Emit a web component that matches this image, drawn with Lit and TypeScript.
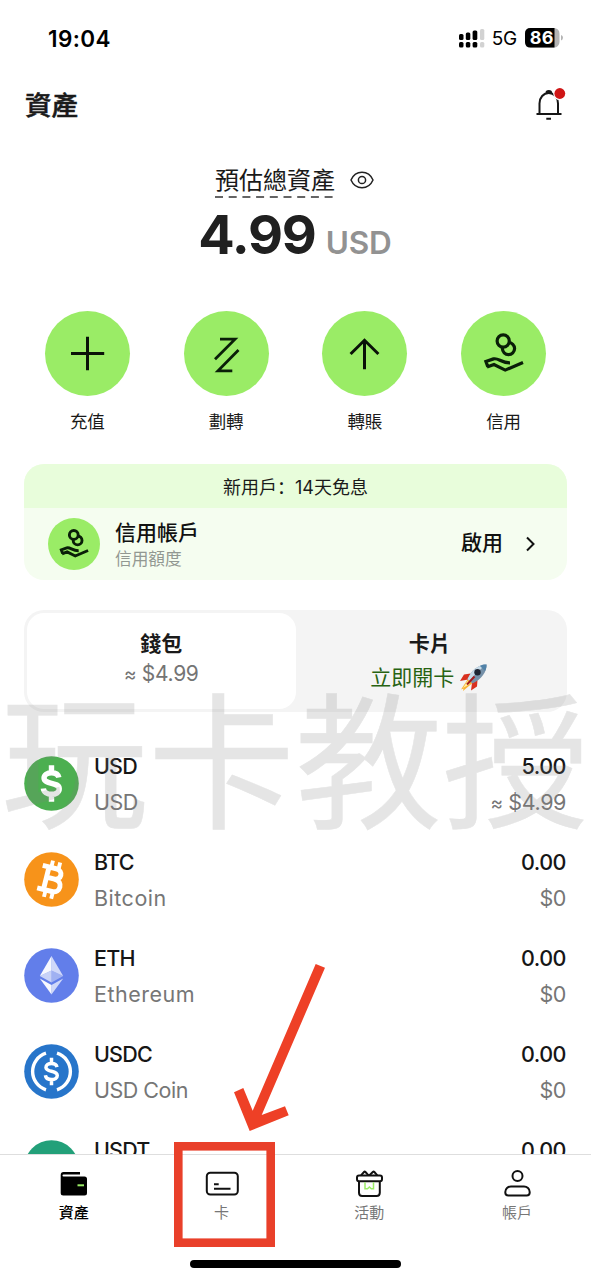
import { LitElement, html, svg, css } from "lit";
import { customElement } from "lit/decorators.js";

const hand = (stroke: number) => svg`
  <g fill="none" stroke="#0a1f08" stroke-width=${stroke}>
    <circle cx="5" cy="-4.9" r="6.1"></circle>
    <circle cx="-.3" cy="-12.5" r="6.1" fill="#9aec66"></circle>
    <path d="M-15.7 13.2L-17.6 8L-10 5.4C-5 4-2.500 9.600 6.500 9.400M-16.500 13.600L-9.500 11L1.700 16.600L19.500 9"></path>
  </g>`;

const actions = [
  { label: "充值", icon: svg`<path d="M-16.500 0H16.700M0-16.700V16.700" fill="none" stroke="#0a1208" stroke-width="3"></path>` },
  { label: "劃轉", icon: svg`<path d="M-6.500-14.300H8.500L-11.500 5.700M12-3.500L-8.500 17.300H5.800" fill="none" stroke="#0a1f08" stroke-width="2.800"></path>` },
  { label: "轉賬", icon: svg`<path d="M0-13V15.700M-13.900 .5L0-13.200L13.900 .5" fill="none" stroke="#0a1208" stroke-width="3"></path>` },
  { label: "信用", icon: hand(3.2) },
];

const dollar = (size: number, stroke: number) => svg`
  <path d="M7.2-5.800C6.600-9 3.800-10.600 0-10.600C-4-10.600-7.300-8.500-7.300-5.300C-7.300 1.500 7.600-2 7.600 5.200C7.600 8.700 4.300 10.600 .2 10.600C-4.300 10.600-7.600 8.500-8 4.900M0-18V-10M0 10V18"
    fill="none" stroke="#fff" stroke-width=${stroke} transform="scale(${size})"></path>`;

const coins = [
  {
    code: "USD", name: "USD", caps: true, amount: "5.00", approx: true, value: "$4.99",
    icon: svg`<circle r="27.300" fill="#4caf50"></circle>${dollar(1.02, 5.3)}`,
  },
  {
    code: "BTC", name: "Bitcoin", caps: false, amount: "0.00", approx: false, value: "$0",
    icon: svg`<circle r="27.300" fill="#f7931a"></circle>
      <g transform="rotate(14) scale(1.080)" fill="none" stroke="#fff">
        <path stroke-width="4.600" d="M-11-10.700H1.800C9.300-10.700 9.300-1 1.800-1H-4.500M1.800-1H3C11.300-1 11.300 10.700 3 10.700H-11M-5-10.700V10.700"></path>
        <path stroke-width="3.600" d="M-2.900-17.300V-10M4-17.300V-10M-2.900 10V17.300M4 10V17.300"></path>
      </g>`,
  },
  {
    code: "ETH", name: "Ethereum", caps: false, amount: "0.00", approx: false, value: "$0",
    icon: svg`<circle r="27.300" fill="#627eea"></circle>
      <path d="M0-19.500L-11.700 .5L0-5Z" fill="#fff" opacity=".95"></path>
      <path d="M0-19.500L11.700 .5L0-5Z" fill="#fff" opacity=".7"></path>
      <path d="M0-5L-11.700 .5L0 7Z" fill="#fff" opacity=".65"></path>
      <path d="M0-5L11.700 .5L0 7Z" fill="#fff" opacity=".4"></path>
      <path d="M-11.700 3L0 9.500V19Z" fill="#fff" opacity=".95"></path>
      <path d="M11.700 3L0 9.500V19Z" fill="#fff" opacity=".7"></path>`,
  },
  {
    code: "USDC", name: "USD Coin", caps: true, amount: "0.00", approx: false, value: "$0",
    icon: svg`<circle r="27.300" fill="#2775ca"></circle>
      <path d="M-5.500-18.300A19.200 19.200 0 0 0-5.500 18.300M5.500-18.300A19.200 19.200 0 0 1 5.500 18.300" fill="none" stroke="#fff" stroke-width="3.400"></path>
      ${dollar(0.76, 4.6)}`,
  },
  { code: "USDT", name: "Tether", caps: false, amount: "0.00", approx: false, value: "$0", icon: svg`<circle r="27.300" fill="#22a079"></circle>` },
];

const tabs = [
  {
    label: "資產", active: true,
    icon: svg`<path d="M-13.300-9V9Q-13.300 11.500-10.800 11.500H10.500Q13 11.500 13 9V-5Q13-7.500 10.500-7.500H-10.500Q-11.500-7.500-11.500-8.500T-10.500-9.500H6V-12H-10.500Q-13.300-12-13.300-9Z" fill="#000"></path>
      <path d="M3.500 1.300H10" stroke="#9aec66" stroke-width="2"></path>`,
  },
  {
    label: "卡", active: false,
    icon: svg`<g fill="none" stroke="#111" stroke-width="2"><rect x="-15.200" y="-11.200" width="31" height="21.800" rx="3.500"></rect><path d="M-8 .2H-3.300M-8 4.700H8.500"></path></g>`,
  },
  {
    label: "活動", active: false,
    icon: svg`<g fill="none" stroke="#111" stroke-width="2"><path d="M-8-8.700L-5-12Q-4.300-12.700-3.500-12L-.5-8.700M.5-8.700L3.800-12Q4.600-12.700 5.400-12L8.300-8.700"></path><rect x="-12" y="-8.500" width="25" height="5.800" rx="2"></rect><path d="M-10-2.700V8.800Q-10 12-6.800 12H7.600Q10.800 12 10.800 8.800V-2.700"></path></g>
      <path d="M-4-1.700V4.800H-1.500L.4 3L2.300 4.800H4.500V-1.700" fill="none" stroke="#9aec66" stroke-width="1.500"></path>`,
  },
  {
    label: "帳戶", active: false,
    icon: svg`<g fill="none" stroke="#111" stroke-width="2"><circle cx=".5" cy="-8" r="5"></circle><path d="M-11.700 8.500V8C-11.700 4.700-9 2.500-6 2.500H7C10 2.500 12.700 4.700 12.700 8V8.500Q12.700 11.500 9.700 11.500H-8.700Q-11.700 11.500-11.700 8.500Z"></path></g>`,
  },
];

@customElement("app-root")
export class AppRoot extends LitElement {
  static styles = css`
    :host {
      display: block;
      position: relative;
      width: 591px;
      height: 1280px;
      overflow: hidden;
      background: #fff;
      color: #1a1a1a;
      font-family: Inter, "Noto Sans CJK TC", sans-serif;
    }
    * { box-sizing: border-box; }
    svg { display: block; overflow: visible; flex: none; }
    .screen { display: flex; flex-direction: column; height: 1280px; }
    .status { height: 76px; padding: 0 28px 0 48px; display: flex; align-items: center; color: #000; }
    .clock { font-size: 22.5px; font-weight: 600; letter-spacing: .4px; flex: 1; }
    .network { font-size: 19px; margin: 1px 8px 0 8px; letter-spacing: -.3px; }
    .head { height: 60px; padding: 0 24px 2px 25px; display: flex; align-items: center; justify-content: space-between; }
    .title { font-size: 26.500px; font-weight: 500; line-height: 40px; -webkit-text-stroke: .5px #1a1a1a; }
    .total { height: 174px; padding-top: 30px; display: flex; flex-direction: column; align-items: center; }
    .estimate { height: 33px; display: flex; align-items: flex-start; gap: 15px; margin-right: 2px; }
    .label { font-size: 24px; line-height: 29px; width: 120px; white-space: nowrap; }
    .dashes { margin-top: 1px; }
    .eye { margin-top: 5px; }
    .balance { display: flex; align-items: baseline; gap: 10px; line-height: 72px; white-space: nowrap; margin-right: 1px; }
    .number { font-size: 54px; font-weight: 700; letter-spacing: -1.200px; color: #202020; }
    .unit { font-size: 31.500px; font-weight: 600; letter-spacing: -.1px; color: #929292; }
    .actions { height: 154px; padding: 1px 18px 0; display: flex; }
    .action { flex: 1; display: flex; flex-direction: column; align-items: center; font-size: 17.500px; line-height: 26px; gap: 13px; }
    .disc { width: 85px; height: 85px; border-radius: 50%; background: #9aec66; }
    .credit { margin: 0 24px; height: 116px; border-radius: 20px; overflow: hidden; background: #f5fdf0; flex: none; }
    .promo { height: 44px; background: #e8fddb; text-align: center; font-size: 18px; line-height: 44px; }
    .colon { font-family: "Noto Sans CJK SC", sans-serif; }
    .offer { height: 72px; padding: 0 31px 0 24px; display: flex; align-items: center; }
    .badge { width: 52px; height: 52px; border-radius: 50%; background: #9aec66; }
    .texts { flex: 1; padding-left: 15px; }
    .account { font-size: 21px; font-weight: 500; line-height: 30px; color: #111; }
    .limit { font-size: 16.700px; line-height: 22px; color: #929892; }
    .enable { font-size: 21px; font-weight: 500; color: #111; padding: 0 23px 6px 0; }
    .switcher { margin: 30px 24px 0; height: 102px; padding: 3px; border-radius: 20px; background: #f4f4f4; display: flex; flex: none; }
    .choice { flex: 1; border-radius: 17px; padding-top: 15px; text-align: center; font-size: 21px; line-height: 32px; }
    .chosen { background: #fff; }
    .choice strong { display: block; font-weight: 600; }
    .sum { color: #747474; line-height: 28px; letter-spacing: -.3px; }
    .open { color: #276312; display: flex; justify-content: center; align-items: center; gap: 6px; line-height: 35px; padding-right: 2px; }
    .coins { flex: none; height: 442px; padding: 23px 25px 0 24px; overflow: hidden; }
    .coin { height: 96.100px; display: flex; align-items: center; white-space: nowrap; }
    .names { flex: 1; padding: 1px 0 0 15px; }
    .code { font-size: 21.500px; font-weight: 500; line-height: 36px; color: #161616; letter-spacing: -.8px; }
    .name { font-size: 21.500px; line-height: 36px; height: 36px; color: #767676; font-weight: 400; letter-spacing: .5px; }
    .names .caps { letter-spacing: -.5px; }
    .figures { text-align: right; padding-top: 1px; }
    .figures .code { letter-spacing: -.5px; }
    .figures .name { letter-spacing: -.4px; }
    .approx { font-size: 19px; line-height: 1; }
    .nav { height: 126px; padding-top: 14px; border-top: 1px solid #dedede; display: flex; background: #fff; flex: none; }
    .tab { flex: 1; display: flex; flex-direction: column; align-items: center; font-size: 15px; line-height: 22px; gap: 3px; color: #777; }
    .active { color: #000; font-weight: 500; }
    .homebar { position: absolute; left: 190px; top: 1260px; width: 211px; height: 8px; border-radius: 4px; background: #000; }
    .watermark { position: absolute; left: 1px; top: 665px; font: 400 147px/176px "Noto Sans CJK TC", sans-serif; color: #808080; -webkit-text-stroke: .5px #808080; opacity: .2; white-space: nowrap; }
    .marks { position: absolute; left: 0; top: 0; }
  `;

  render() {
    return html`
      <div class="screen">
        <div class="status">
          <div class="clock">19:04</div>
          <svg width="25" height="19" viewBox="0 0 25 19">
            <g fill="#000"><rect x="0" y="5" width="4.500" height="6" rx="1.500"></rect><rect x="6.800" y="3.500" width="4.500" height="7.500" rx="1.500"></rect><rect x="13.600" y="1.500" width="4.700" height="9.500" rx="1.500"></rect>
            <rect x="0" y="13" width="4.500" height="5.500" rx="1.500"></rect><rect x="6.800" y="13" width="4.500" height="5.500" rx="1.500"></rect><rect x="13.600" y="13" width="4.700" height="5.500" rx="1.500"></rect></g>
            <g fill="#d2d2d2"><rect x="21" y="0" width="4.300" height="11" rx="1.500"></rect><rect x="21" y="13" width="4.300" height="5.500" rx="1.500"></rect></g>
          </svg>
          <div class="network">5G</div>
          <svg width="38" height="20" viewBox="0 0 38 20">
            <rect x="0" y="0" width="34.500" height="19.500" rx="5.500" fill="#b4b4b4"></rect>
            <path d="M5.500 0H29.500V19.500H5.500Q0 19.500 0 14V5.500Q0 0 5.500 0Z" fill="#000"></path>
            <path d="M36 7V12.500Q38 12 38 9.750T36 7Z" fill="#b4b4b4"></path>
            <text x="16.800" y="16.200" text-anchor="middle" font-size="18" font-weight="700" letter-spacing=".3" fill="#fff">86</text>
          </svg>
        </div>

        <div class="head">
          <div class="title">資產</div>
          <svg width="32" height="34" viewBox="0 0 32 34">
            <g fill="none" stroke="#161616" stroke-width="2">
              <path d="M1.500 26H26.500M4.500 26V15.500C4.500 9.500 8.500 5 13.800 5S23 9.500 23 15.500V26M11.400 5.300C11.400 2.200 16.200 2.200 16.200 5.300M11.300 30.700H16"></path>
            </g>
            <circle cx="24.800" cy="5.500" r="6.600" fill="#fff"></circle>
            <circle cx="24.800" cy="5.500" r="5.400" fill="#cf1515"></circle>
          </svg>
        </div>

        <div class="total">
          <div class="estimate">
            <div class="label">預估總資產
              <svg class="dashes" width="118" height="2" viewBox="0 0 118 2"><path d="M0 1H118" stroke="#333" stroke-width="1.500" stroke-dasharray="8 5.700"></path></svg>
            </div>
            <svg class="eye" width="24" height="18" viewBox="0 0 24 18" fill="none" stroke="#222" stroke-width="1.500"><path d="M1 9C5.500-1.300 18.500-1.300 23 9C18.500 19.300 5.500 19.300 1 9Z"></path><circle cx="12" cy="9" r="3.600"></circle></svg>
          </div>
          <div class="balance"><span class="number">4.99</span><span class="unit">USD</span></div>
        </div>

        <div class="actions">
          ${actions.map((a) => html`<div class="action"><svg class="disc" viewBox="-42.500 -42.500 85 85">${a.icon}</svg>${a.label}</div>`)}
        </div>

        <div class="credit">
          <div class="promo">新用戶<span class="colon" lang="zh-CN">：</span>14天免息</div>
          <div class="offer">
            <svg class="badge" viewBox="-36 -36 72 72">${hand(4)}</svg>
            <div class="texts"><div class="account">信用帳戶</div><div class="limit">信用額度</div></div>
            <div class="enable">啟用</div>
            <svg width="10" height="16" viewBox="0 0 10 16"><path d="M1 1.500L7.500 8L1 14.500" fill="none" stroke="#111" stroke-width="2"></path></svg>
          </div>
        </div>

        <div class="switcher">
          <div class="choice chosen"><strong>錢包</strong><div class="sum"><span class="approx">≈</span> $4.99</div></div>
          <div class="choice"><strong>卡片</strong>
            <div class="open">立即開卡
              <svg width="27" height="27" viewBox="0 0 27 27">
                <path d="M8 15L1 25.500L3.500 24.500L3 27L12.500 19Z" fill="#f9b233"></path>
                <path d="M7.500 17L3 24L10 20Z" fill="#fff2a0"></path>
                <path d="M10.500 9.500L4 10.500L0 17L8 15.500ZM17.500 16L17 22.500L11 26.500L12 19Z" fill="#d9301f"></path>
                <path d="M26.500 .5C19 .3 12 5.500 7.500 15L12.500 19.500C21 15.500 27 8 26.500 .5Z" fill="#7590a8"></path>
                <path d="M26.500 .5C19 .3 12 5.500 7.500 15L9.500 16.700C14 11 20 5 26.500 .5Z" fill="#c8dbe8"></path>
                <path d="M26.500 .5C24 .4 22 .9 20 1.900L25 7C26.200 5 26.600 2.800 26.500 .5Z" fill="#5182a8"></path>
                <circle cx="17.500" cy="8.300" r="3.200" fill="#1d2532"></circle>
                <path d="M14.500 12.500L7 20.500" stroke="#a61b1b" stroke-width="2"></path>
              </svg>
            </div>
          </div>
        </div>

        <div class="coins">
          ${coins.map((c) => html`
            <div class="coin">
              <svg width="55" height="55" viewBox="-27.500 -27.500 55 55">${c.icon}</svg>
              <div class="names"><div class="code">${c.code}</div><div class="name ${c.caps ? "caps" : ""}">${c.name}</div></div>
              <div class="figures"><div class="code">${c.amount}</div><div class="name">${c.approx ? html`<span class="approx">≈</span> ` : ""}${c.value}</div></div>
            </div>`)}
        </div>

        <div class="nav">
          ${tabs.map((t) => html`<div class="tab ${t.active ? "active" : ""}"><svg width="34" height="30" viewBox="-17 -15 34 30">${t.icon}</svg>${t.label}</div>`)}
        </div>
      </div>
      <div class="watermark">玩卡教授</div>
      <div class="homebar"></div>
      <svg class="marks" width="591" height="1280" viewBox="0 0 591 1280">
        <rect x="178.300" y="1146.300" width="92.400" height="96.400" fill="none" stroke="#e9402a" stroke-width="8.600"></rect>
        <path d="M234 1092.300L243.300 1088L252.700 1110.700L315.700 964L325 967.700L261.700 1115L285 1106.300L288.700 1115.300L249.700 1131Z" fill="#ee4026"></path>
      </svg>
    `;
  }
}
